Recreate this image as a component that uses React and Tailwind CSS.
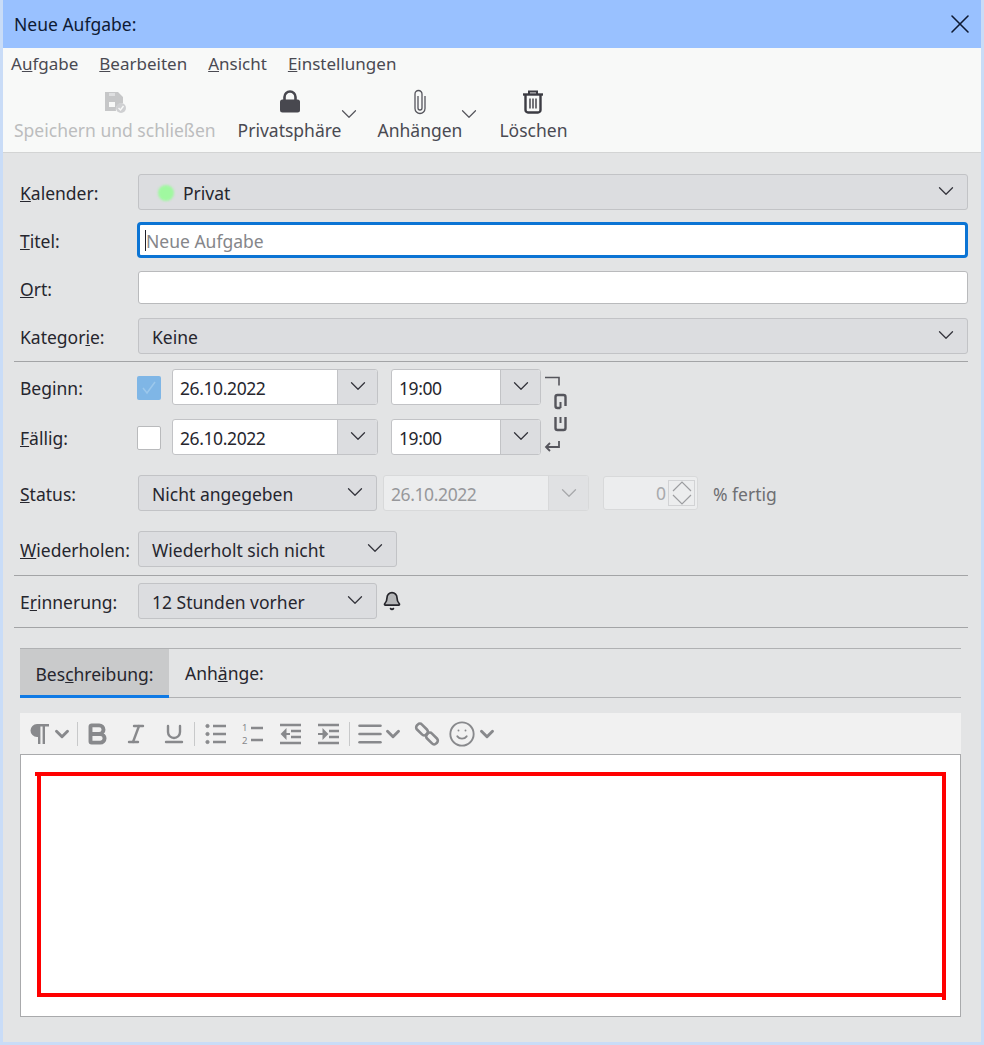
import { ChevronDown, Bell, Bold, Italic, Underline, AlignJustify, Smile, X } from 'lucide-react'

const font = { fontFamily: '"Noto Sans", sans-serif' }

function Select({ className = '', children }) {
  return (
    <div className={`h-[36px] flex items-center rounded-[3px] border border-[#c2c3c6] bg-[#dcdde0] pl-[13px] text-[#26262e] ${className}`}>
      <span className="flex items-center pt-[2px]">{children}</span>
      <ChevronDown className="w-[26px] h-[26px] ml-auto mr-[8px] -mt-[2px] text-[#35353d]" strokeWidth={1.2} />
    </div>
  )
}

function DateField({ value, className }) {
  return (
    <div className={`h-[36px] flex rounded-[3px] border border-[#c2c3c6] bg-white overflow-hidden ${className}`}>
      <div className="flex-1 flex items-center pl-[7px] pt-[2px] text-[#26262e] tracking-[-0.4px]">{value}</div>
      <div className="w-[40px] flex items-center justify-center bg-[#dcdde0] border-l border-[#c2c3c6]">
        <ChevronDown className="w-[26px] h-[26px] -mt-[2px] text-[#35353d]" strokeWidth={1.2} />
      </div>
    </div>
  )
}

function Row({ label, mt, children }) {
  return (
    <div className={`flex items-center ${mt}`}>
      <div className="w-[118px] shrink-0 pt-[2px] text-[#26262e]">{label}</div>
      {children}
    </div>
  )
}

function Rule({ className }) {
  return <div className={`h-px bg-[#a3a4a6] -ml-[6px] ${className}`} />
}

function ToolButton({ icon, label, disabled, chevron, className = '' }) {
  return (
    <div className={`relative flex flex-col items-center ${disabled ? 'text-[#bcbdbe]' : 'text-[#4a4a52]'} ${className}`}>
      <div className="h-[28px] flex items-center justify-center">{icon}</div>
      <div className="leading-[24px] mt-[2px]">{label}</div>
      {chevron && <ChevronDown className="absolute right-[-20px] top-[13px] w-[26px] h-[26px] text-[#55555c]" strokeWidth={1.1} />}
    </div>
  )
}

function SaveIcon() {
  return (
    <svg width="24" height="24" viewBox="0 0 24 24" fill="none">
      <path d="M2 2h13l5 5v6a6.500 6.500 0 0 0-7 8H2z" fill="#c6c7c8" />
      <rect x="6" y="12" width="6" height="5" fill="#f8f9f8" />
      <rect x="6" y="3" width="6" height="3" fill="#dedfe0" />
      <circle cx="18" cy="18" r="5" fill="#cfd0d2" />
      <path d="m15.500 18 2 2 3-4" stroke="#f8f9f8" strokeWidth="1.400" />
    </svg>
  )
}

function LockIcon() {
  return (
    <svg width="24" height="26" viewBox="0 0 24 26" fill="none">
      <path d="M6.500 11V8a5.500 5.500 0 0 1 11 0v3" stroke="#48484f" strokeWidth="2.600" />
      <rect x="2" y="10.500" width="20" height="13" rx="2.500" fill="#48484f" />
    </svg>
  )
}

function ClipIcon() {
  return (
    <svg width="14" height="26" viewBox="0 0 14 26" fill="none" stroke="#55555c" strokeWidth="1.300">
      <path d="M5 7v12a2 2 0 0 0 4 0V5a3.500 3.500 0 0 0-7 0v14.500a5 5 0 0 0 10 0V7" />
    </svg>
  )
}

function TrashIcon() {
  return (
    <svg width="24" height="26" viewBox="0 0 24 26" fill="none" stroke="#3c3c43">
      <path d="M2 5.500h20" strokeWidth="2.400" />
      <path d="M8 5V2.500h8V5" strokeWidth="2" />
      <path d="M4.500 6v15a2.500 2.500 0 0 0 2.500 2.500h10a2.500 2.500 0 0 0 2.500-2.500V6" strokeWidth="2.400" />
      <path d="M9 9.500v10M12 9.500v10M15 9.500v10" strokeWidth="1.400" />
    </svg>
  )
}

function ChainIcon() {
  return (
    <svg width="28" height="84" viewBox="0 0 28 84" fill="none" stroke="#55555c">
      <path d="M4 3.500h14v8" strokeWidth="1.600" />
      <path d="M19.500 34h-3a2 2 0 0 1-2-2v-9a2 2 0 0 1 2-2h6a2 2 0 0 1 2 2v9" strokeWidth="2.400" />
      <path d="M19.500 28v6M19.500 43v6" strokeWidth="2" />
      <path d="M14.500 43v11a2 2 0 0 0 2 2h6a2 2 0 0 0 2-2V43" strokeWidth="2.400" />
      <path d="M18 67v6H5m4-4-4 4 4 4" strokeWidth="1.800" />
    </svg>
  )
}

function PilcrowIcon() {
  return (
    <svg width="24" height="24" viewBox="0 0 24 24" fill="#88898c">
      <path d="M22 2H10a6.500 6.500 0 0 0 0 13h1v7h2.400V4.500h2.200V22H18V4.500h4z" />
    </svg>
  )
}

function BulletIcon() {
  return (
    <svg width="21" height="24" viewBox="0 0 21 24" fill="#88898c" stroke="#88898c">
      <circle cx="2.500" cy="4" r="1.600" /><circle cx="2.500" cy="12" r="1.600" /><circle cx="2.500" cy="20" r="1.600" />
      <path d="M8 4h13M8 12h13M8 20h13" strokeWidth="2.400" />
    </svg>
  )
}

function NumberIcon() {
  return (
    <div className="w-[21px] h-[24px] flex items-center">
      <div className="w-[9px] text-[9.5px] leading-[13px] text-[#88898c]">
        <div>1</div>
        <div>2</div>
      </div>
      <svg width="12" height="24" viewBox="0 0 12 24" stroke="#88898c">
        <path d="M0 6h12M0 18h12" strokeWidth="2.400" />
      </svg>
    </div>
  )
}

function IndentIcon({ out }) {
  return (
    <svg width="21" height="24" viewBox="0 0 21 24" fill="#88898c" stroke="#88898c">
      <path d="M0 3h21M11 9h10M11 15h10M0 21h21" strokeWidth="2.400" />
      {out ? <path d="M5 12h5M5.500 8.500 2 12l3.500 3.500z" strokeWidth="2" /> : <path d="M0 12h5M5.500 8.500 9 12l-3.500 3.500z" strokeWidth="2" />}
    </svg>
  )
}

function LinkIcon() {
  return (
    <svg width="26" height="26" viewBox="0 0 26 26" fill="none" stroke="#88898c" strokeWidth="2.600">
      <rect x="1.500" y="5" width="13" height="7" rx="3" transform="rotate(45 8 8.500)" />
      <rect x="11.500" y="14" width="13" height="7" rx="3" transform="rotate(45 18 17.500)" />
    </svg>
  )
}

const fmt = 'text-[#88898c]'

export default function App() {
  return (
    <div className="w-[984px] h-[1045px] flex flex-col overflow-hidden text-[17.5px] leading-[24px] bg-[#e3e4e5] border-x-[3px] border-b-[3px] border-[#c9dcf7]" style={font}>
      <div className="-mx-[3px] h-[48px] shrink-0 flex items-center justify-between pl-[14px] pr-[8px] bg-[#99c1ff] text-[#0e1a33]">
        <span>Neue Aufgabe:</span>
        <X className="w-[32px] h-[32px]" strokeWidth={1.2} />
      </div>

      <div className="h-[105px] shrink-0 bg-[#f8f9f8] border-b border-[#d3d4d4] text-[#4a4a52]">
        <div className="flex gap-[21px] pl-[8px] pt-[4px] text-[17px]">
          <span>A<u>u</u>fgabe</span>
          <span><u>B</u>earbeiten</span>
          <span><u>A</u>nsicht</span>
          <span><u>E</u>instellungen</span>
        </div>
        <div className="flex items-start pl-[11px] mt-[12px]">
          <ToolButton disabled label="Speichern und schließen" icon={<SaveIcon />} />
          <ToolButton className="ml-[22px]" chevron label="Privatsphäre" icon={<LockIcon />} />
          <ToolButton className="ml-[36px]" chevron label="Anhängen" icon={<ClipIcon />} />
          <ToolButton className="ml-[37px]" label="Löschen" icon={<TrashIcon />} />
        </div>
      </div>

      <div className="flex-1 pl-[17px] pr-[13px]">
        <Row label={<><u>K</u>alender:</>} mt="mt-[21px]">
          <Select className="flex-1">
            <span className="w-[16px] h-[16px] ml-[6px] mr-[9px] rounded-full bg-[#a0f8a0] blur-[1px]" />
            Privat
          </Select>
        </Row>
        <Row label={<><u>T</u>itel:</>} mt="mt-[12px]">
          <div className="flex-1 -ml-[1px] h-[36px] flex items-center rounded-[4px] border-[3px] border-[#0b74d4] bg-white pl-[5px] pt-[1px] text-[#85868a]">
            <span className="w-px h-[21px] bg-[#20202a]" />Neue Aufgabe
          </div>
        </Row>
        <Row label={<><u>O</u>rt:</>} mt="mt-[13px]">
          <div className="flex-1 h-[33px] rounded-[3px] border border-[#b9babc] bg-white" />
        </Row>
        <Row label={<>Kategor<u>i</u>e:</>} mt="mt-[14px]">
          <Select className="flex-1">Keine</Select>
        </Row>
        <Rule className="mt-[7px]" />

        <div className="flex items-start h-[86px] mt-[7px]">
          <div className="flex-none">
            <div className="flex items-center">
              <div className="w-[117px] shrink-0 pt-[2px] text-[#26262e]">Be<u>g</u>inn:</div>
              <div className="w-[24px] h-[24px] mt-[2px] rounded-[2px] bg-[#7fb6e6] flex items-center justify-center">
                <svg width="18" height="18" viewBox="0 0 18 18" fill="none" stroke="#9cc8ec" strokeWidth="1.500"><path d="m3 9 4 5 8-11" /></svg>
              </div>
              <DateField value="26.10.2022" className="ml-[11px] w-[206px]" />
              <DateField value="19:00" className="ml-[13px] w-[150px]" />
            </div>
            <div className="flex items-center mt-[14px]">
              <div className="w-[117px] shrink-0 pt-[2px] text-[#26262e]"><u>F</u>ällig:</div>
              <div className="w-[24px] h-[24px] mt-[2px] rounded-[2px] border border-[#b9babc] bg-white" />
              <DateField value="26.10.2022" className="ml-[11px] w-[206px]" />
              <DateField value="19:00" className="ml-[13px] w-[150px]" />
            </div>
          </div>
          <div className="mt-[5px] shrink-0"><ChainIcon /></div>
        </div>

        <Row label={<><u>S</u>tatus:</>} mt="mt-[20px]">
          <Select className="w-[239px]">Nicht angegeben</Select>
          <div className="ml-[6px] w-[206px] h-[36px] flex rounded-[3px] border border-[#d8d9da] bg-[#ecedee] overflow-hidden text-[#97989b]">
            <div className="flex-1 flex items-center pl-[7px] pt-[2px] tracking-[-0.4px]">26.10.2022</div>
            <div className="w-[40px] flex items-center justify-center bg-[#e0e1e3] border-l border-[#d8d9da]">
              <ChevronDown className="w-[26px] h-[26px] text-[#a8a9ac]" strokeWidth={1.2} />
            </div>
          </div>
          <div className="ml-[14px] w-[95px] h-[34px] flex items-center justify-end rounded-[3px] border border-[#d8d9da] bg-[#ecedee] text-[#a8a9ac]">
            <span>0</span>
            <div className="mx-[2px] w-[27px] h-[26px] flex items-center justify-center border border-[#d2d3d5]">
              <svg width="24" height="26" viewBox="0 0 24 26" fill="none" stroke="#9c9da0" strokeWidth="1.200">
                <path d="m3 11 9-9 9 9M3 15l9 9 9-9" />
              </svg>
            </div>
          </div>
          <span className="ml-[15px] pt-[2px] text-[#6e6f73]">% fertig</span>
        </Row>
        <Row label={<><u>W</u>iederholen:</>} mt="mt-[20px]">
          <Select className="w-[259px]">Wiederholt sich nicht</Select>
        </Row>
        <Rule className="mt-[8px]" />
        <Row label={<>E<u>r</u>innerung:</>} mt="mt-[7px]">
          <Select className="w-[239px]">12 Stunden vorher</Select>
          <Bell className="ml-[5px] w-[20px] h-[20px] text-[#24242a] fill-[#b5b6b8]" strokeWidth={2} />
        </Row>
        <Rule className="mt-[8px]" />

        <div className="mt-[20px] mr-[7px] h-[50px] flex border-y border-[#b0b1b3] text-[#26262e]">
          <div className="w-[149px] pt-[3px] flex items-center justify-center bg-[#c9cacb] border-b-[3px] border-[#0f7ae5] -mb-px">Bes<u>c</u>hreibung:</div>
          <div className="ml-[16px] flex items-center">Anh<u>ä</u>nge:</div>
        </div>

        <div className="mt-[15px] mr-[7px] h-[41px] flex items-center bg-[#f1f1f1] pl-[7px]">
          <PilcrowIcon />
          <ChevronDown className={`w-[22px] h-[22px] ${fmt}`} strokeWidth={3.2} />
          <span className="w-px h-[24px] bg-[#c8c9ca] ml-[4px]" />
          <Bold className={`w-[26px] h-[26px] ml-[6px] ${fmt}`} strokeWidth={3.6} />
          <Italic className={`w-[24px] h-[24px] ml-[14px] ${fmt}`} strokeWidth={2.4} />
          <Underline className={`w-[24px] h-[24px] ml-[14px] ${fmt}`} strokeWidth={2.4} />
          <span className="w-px h-[24px] bg-[#c8c9ca] ml-[8px]" />
          <span className="ml-[10px]"><BulletIcon /></span>
          <span className="ml-[16px]"><NumberIcon /></span>
          <span className="ml-[17px]"><IndentIcon out /></span>
          <span className="ml-[17px]"><IndentIcon /></span>
          <span className="w-px h-[24px] bg-[#c8c9ca] ml-[10px]" />
          <AlignJustify className={`w-[28px] h-[28px] ml-[6px] ${fmt}`} strokeWidth={2.2} />
          <ChevronDown className={`w-[22px] h-[22px] -ml-[2px] ${fmt}`} strokeWidth={3.2} />
          <span className="ml-[10px]"><LinkIcon /></span>
          <Smile className={`w-[28px] h-[28px] ml-[8px] ${fmt}`} strokeWidth={1.6} />
          <ChevronDown className={`w-[22px] h-[22px] ${fmt}`} strokeWidth={3.2} />
        </div>

        <div className="mr-[7px] h-[263px] bg-white border border-[#a9aaac] pl-[16px] pr-[14px] pt-[17px]">
          <div className="relative h-[225px] border-[4px] border-[#ff0000]">
            <span className="absolute -left-[6px] -top-[4px] w-[2px] h-[4px] bg-[#ff0000]" />
            <span className="absolute -right-[4px] -bottom-[7px] w-[4px] h-[3px] bg-[#ff0000]" />
          </div>
        </div>
      </div>
    </div>
  )
}
